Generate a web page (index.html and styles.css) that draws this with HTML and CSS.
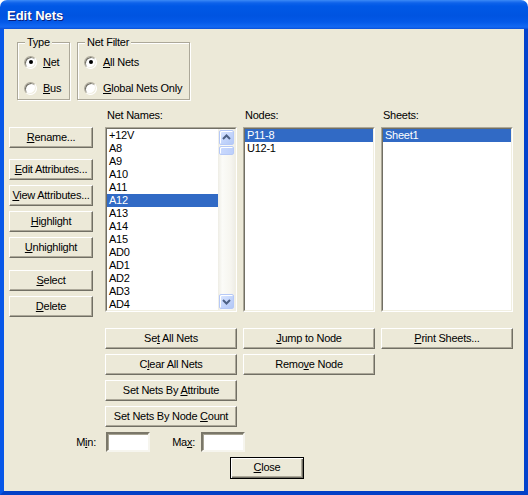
FILE: index.html
```html
<!DOCTYPE html>
<html>
<head>
<meta charset="utf-8">
<link rel="stylesheet" href="styles.css">
</head>
<body>
<div class="window">
  <div class="titlebar"><span class="title">Edit Nets</span></div>
  <div class="frame">
    <div class="client">
      <div class="top">
        <div class="group type">
          <span class="legend">Type</span>
          <div class="radio-row"><span class="radio checked"></span><span><u>N</u>et</span></div>
          <div class="radio-row"><span class="radio"></span><span><u>B</u>us</span></div>
        </div>
        <div class="group filter">
          <span class="legend">Net Filter</span>
          <div class="radio-row"><span class="radio checked"></span><span><u>A</u>ll Nets</span></div>
          <div class="radio-row"><span class="radio"></span><span><u>G</u>lobal Nets Only</span></div>
        </div>
      </div>

      <div class="main">
        <div class="leftcol">
          <div class="btn"><span><u>R</u>ename...</span></div>
          <div class="btn gap-lg"><span><u>E</u>dit Attributes...</span></div>
          <div class="btn gap-sm"><span><u>V</u>iew Attributes...</span></div>
          <div class="btn gap-sm"><span><u>H</u>ighlight</span></div>
          <div class="btn gap-sm"><span><u>U</u>nhighlight</span></div>
          <div class="btn gap-xl"><span><u>S</u>elect</span></div>
          <div class="btn gap-sm"><span><u>D</u>elete</span></div>
        </div>
        <div class="lists">
          <div class="listcol">
            <div class="listlabel">Net Names:</div>
            <div class="listbox">
              <div class="listinner with-scroll">
                <div class="items">
                  <div class="item">+12V</div>
                  <div class="item">A8</div>
                  <div class="item">A9</div>
                  <div class="item">A10</div>
                  <div class="item">A11</div>
                  <div class="item sel">A12</div>
                  <div class="item">A13</div>
                  <div class="item">A14</div>
                  <div class="item">A15</div>
                  <div class="item">AD0</div>
                  <div class="item">AD1</div>
                  <div class="item">AD2</div>
                  <div class="item">AD3</div>
                  <div class="item">AD4</div>
                </div>
                <div class="scrollbar">
                  <div class="sbtn"><svg width="15" height="15" viewBox="0 0 15 15"><path d="M4 9 L7.5 5.5 L11 9" fill="none" stroke="#4D6185" stroke-width="2"/></svg></div>
                  <div class="thumb"></div>
                  <div class="track"></div>
                  <div class="sbtn"><svg width="15" height="15" viewBox="0 0 15 15"><path d="M4 6 L7.5 9.5 L11 6" fill="none" stroke="#4D6185" stroke-width="2"/></svg></div>
                </div>
              </div>
            </div>
          </div>
          <div class="listcol">
            <div class="listlabel">Nodes:</div>
            <div class="listbox">
              <div class="listinner">
                <div class="items">
                  <div class="item sel">P11-8</div>
                  <div class="item">U12-1</div>
                </div>
              </div>
            </div>
          </div>
          <div class="listcol">
            <div class="listlabel">Sheets:</div>
            <div class="listbox">
              <div class="listinner">
                <div class="items">
                  <div class="item sel">Sheet1</div>
                </div>
              </div>
            </div>
          </div>
        </div>
      </div>

      <div class="bottom">
        <div class="btn"><span>Se<u>t</u> All Nets</span></div>
        <div class="btn"><span><u>J</u>ump to Node</span></div>
        <div class="btn"><span><u>P</u>rint Sheets...</span></div>
        <div class="btn"><span>C<u>l</u>ear All Nets</span></div>
        <div class="btn"><span>Remo<u>v</u>e Node</span></div>
        <div class="empty"></div>
        <div class="btn"><span>Set Nets By <u>A</u>ttribute</span></div>
        <div class="empty"></div>
        <div class="empty"></div>
        <div class="btn"><span>Set Nets By Node <u>C</u>ount</span></div>
      </div>

      <div class="minmax">
        <span class="minlabel">M<u>i</u>n:</span>
        <div class="field min"></div>
        <span class="maxlabel">Ma<u>x</u>:</span>
        <div class="field max"></div>
      </div>

      <div class="closerow">
        <div class="btn default"><span><u>C</u>lose</span></div>
      </div>
    </div>
  </div>
</div>
</body>
</html>
```

FILE: styles.css
```css
* { box-sizing: border-box; }
html, body { margin: 0; padding: 0; }
body {
  background: #ffffff;
  font-family: "Liberation Sans", Arial, sans-serif;
  font-size: 11px;
  letter-spacing: -0.25px;
  color: #000;
  width: 528px;
  height: 495px;
  overflow: hidden;
}
u { text-decoration: underline; text-underline-offset: 1px; }

.window {
  width: 528px;
  height: 495px;
  display: flex;
  flex-direction: column;
}
.titlebar {
  height: 29px;
  border-radius: 7px 7px 0 0;
  background: linear-gradient(to bottom, #3D8CF6 0px, #2A7AF2 1px, #0D62EA 3px, #0058E6 6px, #0054E1 16px, #0459E8 22px, #0D63EF 25px, #1368F2 27px, #0A4FD8 29px);
  display: flex;
  align-items: center;
  padding: 2px 0 0 7px;
}
.title {
  color: #fff;
  font-weight: bold;
  font-size: 13px;
  text-shadow: 1px 1px 0 #0A1E78;
  letter-spacing: 0;
}
.frame {
  flex: 1;
  border-left: 4px solid #0757E8;
  border-right: 4px solid #0342CC;
  border-bottom: 4px solid #0340C6;
  background: #ECE9D8;
}
.client {
  height: 462px;
  background: #ECE9D8;
}

/* group boxes */
.top {
  display: flex;
  padding: 13px 0 0 13px;
  gap: 7px;
}
.group {
  position: relative;
  height: 58px;
  border: 1px solid #ACA899;
  box-shadow: inset 1px 1px 0 #fff, 1px 1px 0 #fff;
  padding: 12px 0 0 6px;
  display: flex;
  flex-direction: column;
  gap: 12px;
}
.group.type { width: 53px; }
.group.filter { width: 113px; }
.legend {
  position: absolute;
  top: -7px;
  left: 7px;
  background: #ECE9D8;
  padding: 0 2px;
  line-height: 13px;
}
.radio-row {
  display: flex;
  align-items: center;
  gap: 6px;
  height: 14px;
  line-height: 13px;
}
.radio {
  width: 13px;
  height: 13px;
  border-radius: 50%;
  background: #fff;
  border: 1px solid;
  border-color: #ACA899 #fff #fff #ACA899;
  box-shadow: inset 1px 1px 0 #716F64, inset -1px -1px 0 #F1EFE2;
  position: relative;
  flex: none;
}
.radio.checked::after {
  content: "";
  position: absolute;
  left: 3.5px;
  top: 3.5px;
  width: 4px;
  height: 4px;
  border-radius: 50%;
  background: #000;
}

/* buttons */
.btn {
  height: 21px;
  background: #ECE9D8;
  border: 1px solid;
  border-color: #fff #716F64 #716F64 #fff;
  box-shadow: inset -1px -1px 0 #ACA899;
  display: flex;
  align-items: center;
  justify-content: center;
  line-height: 13px;
  white-space: nowrap;
  padding-bottom: 1px;
}
.btn.default {
  width: 74px;
  height: 22px;
  border: 1px solid #000;
  box-shadow: inset 1px 1px 0 #fff, inset -1px -1px 0 #716F64, inset -2px -2px 0 #ACA899;
}

.main {
  display: flex;
  align-items: flex-start;
  margin-top: 9px;
  padding-left: 5px;
}
.leftcol {
  width: 84px;
  margin-top: 18px;
  display: flex;
  flex-direction: column;
}
.gap-sm { margin-top: 5px; }
.gap-lg { margin-top: 11px; }
.gap-xl { margin-top: 12px; }

.lists {
  margin-left: 12px;
  display: grid;
  grid-template-columns: repeat(3, 132px);
  column-gap: 6px;
}
.listlabel {
  height: 13px;
  line-height: 13px;
  padding-left: 2px;
  margin-bottom: 5px;
}
.listbox {
  height: 185px;
  border: 1px solid;
  border-color: #ACA899 #fff #fff #ACA899;
}
.listinner {
  height: 100%;
  border: 1px solid;
  border-color: #716F64 #F1EFE2 #F1EFE2 #716F64;
  background: #fff;
  overflow: hidden;
  display: flex;
}
.items { flex: 1; min-width: 0; }
.item {
  height: 13px;
  line-height: 13px;
  padding-left: 2px;
  white-space: nowrap;
}
.item.sel {
  background: #316AC5;
  color: #fff;
}
.scrollbar {
  width: 17px;
  flex: none;
  display: flex;
  flex-direction: column;
  background: linear-gradient(to right, #EEEDE5 0, #FBFBF8 25%, #F6F5EF 75%, #EEEDE6 100%);
}
.sbtn {
  width: 15px;
  height: 15px;
  margin: 1px;
  border-radius: 2px;
  border: 1px solid #B6C9F7;
  background: linear-gradient(to bottom right, #DCE7FF 0, #C5D6FC 50%, #B3C8F6 100%);
  box-shadow: inset 1px 1px 0 #fff;
  flex: none;
}
.sbtn svg { display: block; margin: -1px 0 0 -1px; }
.thumb {
  width: 15px;
  height: 9px;
  margin: 0 1px;
  border-radius: 2px;
  border: 1px solid #B6C9F7;
  background: linear-gradient(to right, #CAD9FD, #BCCFFB);
  box-shadow: inset 1px 1px 0 #fff;
  flex: none;
}
.track { flex: 1; }

.bottom {
  margin-top: 11px;
  padding-left: 101px;
  display: grid;
  grid-template-columns: repeat(3, 132px);
  grid-auto-rows: 21px;
  column-gap: 6px;
  row-gap: 5px;
}

.minmax {
  display: flex;
  align-items: center;
  margin-top: 5px;
  padding-left: 61px;
  height: 20px;
}
.minlabel { width: 31px; text-align: right; }
.maxlabel { width: 45px; text-align: right; }
.field {
  width: 44px;
  height: 20px;
  background: #fff;
  border: 2px solid;
  border-color: #7A7769 #F6F5EE #F6F5EE #7A7769;
  box-shadow: inset 1px 1px 0 #A6A393;
}
.field.min { margin-left: 10px; }
.field.max { margin-left: 6px; }

.closerow {
  margin-top: 5px;
  padding-left: 226px;
}
```
